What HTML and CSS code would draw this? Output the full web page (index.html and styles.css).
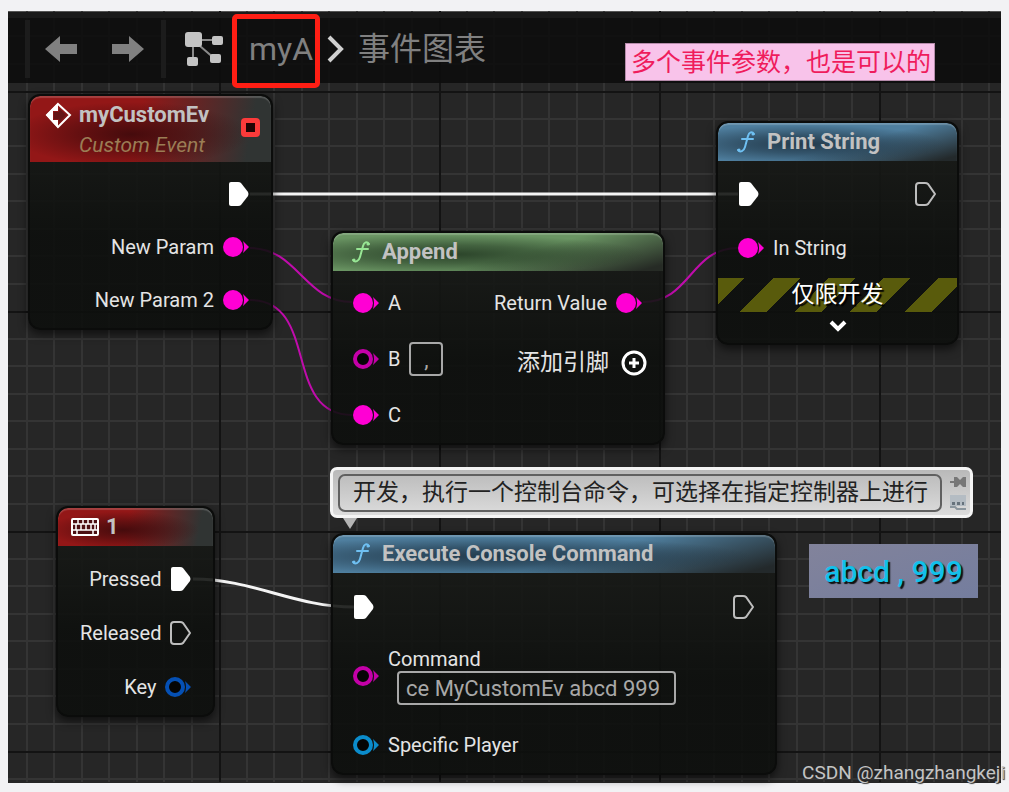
FILE: index.html
```html
<!DOCTYPE html>
<html lang="zh-CN">
<head>
  <meta charset="UTF-8">
  <meta name="viewport" content="width=device-width, initial-scale=1.0">
  <title>事件图表</title>
  <link rel="stylesheet" href="styles.css">
</head>
<body>
  <!-- icons -->
  <svg class="sprite" aria-hidden="true">
    <symbol id="exec-on" viewBox="0 0 21 24">
      <path d="M1 2Q1 0 3 0H10Q12 0 13 1L20 10Q21 12 20 14L13 23Q12 24 10 24H3Q1 24 1 22Z" fill="#fff"/>
    </symbol>
    <symbol id="exec-off" viewBox="0 0 21 24">
      <path d="M1 4Q1 1 4 1H10Q12 1 13 2L20 12L13 22Q12 23 10 23H4Q1 23 1 20Z" fill="none" stroke="#bdbdbd" stroke-width="2"/>
    </symbol>
    <symbol id="pin-on" viewBox="0 0 26 20">
      <circle cx="10" cy="10" r="10" fill="currentColor"/>
      <path d="M20 4L26 10L20 16Q22 10 20 4Z" fill="currentColor"/>
    </symbol>
    <symbol id="pin-off" viewBox="0 0 26 20">
      <circle cx="10" cy="10" r="8" fill="#050505" stroke="currentColor" stroke-width="4"/>
      <path d="M20 4L26 10L20 16Q22 10 20 4Z" fill="currentColor"/>
    </symbol>
    <symbol id="func" viewBox="0 0 20 22">
      <path d="M18 3C16 0 13 1 12 5L9 16C8 20 4 22 2 19M6 8H17" fill="none" stroke="currentColor" stroke-width="2" stroke-linecap="round"/>
      <circle cx="17" cy="3" r="1.5" fill="currentColor"/>
      <circle cx="3" cy="19" r="1.5" fill="currentColor"/>
    </symbol>
  </svg>

  <main class="graph">
    <svg class="graph__grid" aria-hidden="true">
      <defs>
        <pattern id="grid" x="211" y="80" width="220" height="220" patternUnits="userSpaceOnUse">
          <path d="M28 0V220M55 0V220M83 0V220M110 0V220M138 0V220M165 0V220M193 0V220M0 28H220M0 55H220M0 83H220M0 110H220M0 138H220M0 165H220M0 193H220" stroke="#343434" stroke-width="2"/>
          <path d="M1 0V220M0 1H220" stroke="#131313" stroke-width="2"/>
        </pattern>
      </defs>
      <rect width="100%" height="100%" fill="url(#grid)"/>
    </svg>

    <!-- wires -->
    <svg class="graph__wires" aria-hidden="true">
      <g fill="none" stroke="#f4f4f4" stroke-width="3">
        <path d="M242 183H730"/>
        <path d="M185 568C245 568 286 596 346 596"/>
      </g>
      <g fill="none" stroke="#c00cac" stroke-width="2">
        <path d="M242 237C290 237 296 291 344 291"/>
        <path d="M242 289C312 289 274 404 344 404"/>
        <path d="M635 291C683 291 682 237 730 237"/>
      </g>
    </svg>

    <header class="toolbar">
      <span class="toolbar__line"></span>
      <button class="toolbar__btn toolbar__btn_back" type="button" aria-label="Back">
        <svg width="32" height="26" viewBox="0 0 32 26"><path d="M0 13L15 0V8H32V18H15V26Z" fill="#808080"/></svg>
      </button>
      <button class="toolbar__btn toolbar__btn_forward" type="button" aria-label="Forward">
        <svg width="32" height="26" viewBox="0 0 32 26"><path d="M32 13L17 0V8H0V18H17V26Z" fill="#808080"/></svg>
      </button>
      <span class="toolbar__line"></span>
      <svg class="toolbar__graph" width="38" height="34" viewBox="0 0 38 34">
        <path d="M8 8H32M8 8V29M8 8L30 27" stroke="#8a8a8a" stroke-width="2"/>
        <g fill="#c4c4c4">
          <rect width="17" height="15" rx="3"/>
          <rect x="27" y="4" width="11" height="9" rx="2"/>
          <rect x="2" y="25" width="11" height="9" rx="2"/>
          <rect x="25" y="22" width="11" height="9" rx="2"/>
        </g>
      </svg>
      <nav class="crumbs">
        <a class="crumbs__link" href="#">myA</a>
        <svg width="17" height="28" viewBox="0 0 17 28"><path d="M2 2L14 14L2 26" fill="none" stroke="#d0d0d0" stroke-width="4"/></svg>
        <a class="crumbs__link" href="#">事件图表</a>
      </nav>
    </header>
    <div class="mark"></div>
    <div class="note">多个事件参数，也是可以的</div>

    <!-- myCustomEv -->
    <section class="node node_custom">
      <div class="node__head node__head_red node__head_tall">
        <svg width="27" height="27" viewBox="0 0 27 27">
          <path d="M13 2L25 13L13 25L2 13Z" fill="none" stroke="#fff" stroke-width="2"/>
          <path d="M13 1V9H8V18H13V26L1 13Z" fill="#fff"/>
          <path d="M9 10H14V6L21 13L14 20V17H9Z" fill="#641516"/>
        </svg>
        <div class="node__titles">
          <h2 class="node__title">myCustomEv</h2>
          <p class="node__sub">Custom Event</p>
        </div>
        <span class="delegate"></span>
      </div>
      <div class="node__body">
        <div class="pins pins_right">
          <div class="pin"><svg class="pin__exec"><use href="#exec-on"/></svg></div>
          <div class="pin">New Param<svg class="pin__data pin__data_string"><use href="#pin-on"/></svg></div>
          <div class="pin">New Param 2<svg class="pin__data pin__data_string"><use href="#pin-on"/></svg></div>
        </div>
      </div>
    </section>

    <!-- Print String -->
    <section class="node node_print">
      <div class="node__head node__head_blue">
        <svg class="node__func"><use href="#func"/></svg>
        <h2 class="node__title">Print String</h2>
      </div>
      <div class="node__body">
        <div class="pins">
          <div class="pin"><svg class="pin__exec"><use href="#exec-on"/></svg></div>
          <div class="pin"><svg class="pin__data pin__data_string"><use href="#pin-on"/></svg>In String</div>
        </div>
        <div class="pins pins_right">
          <div class="pin"><svg class="pin__exec"><use href="#exec-off"/></svg></div>
        </div>
      </div>
      <div class="node__dev">仅限开发</div>
      <button class="node__more" type="button" aria-label="More">
        <svg width="18" height="12" viewBox="0 0 18 12"><path d="M2 2L9 9L16 2" fill="none" stroke="#fff" stroke-width="4"/></svg>
      </button>
    </section>

    <!-- Append -->
    <section class="node node_append">
      <div class="node__head node__head_green">
        <svg class="node__func"><use href="#func"/></svg>
        <h2 class="node__title">Append</h2>
      </div>
      <div class="node__body">
        <div class="pins">
          <div class="pin"><svg class="pin__data pin__data_string"><use href="#pin-on"/></svg>A</div>
          <div class="pin">
            <svg class="pin__data pin__data_string pin__data_dim"><use href="#pin-off"/></svg>
            <label for="pin-b">B</label>
            <input class="field field_short" id="pin-b" type="text" value=",">
          </div>
          <div class="pin"><svg class="pin__data pin__data_string"><use href="#pin-on"/></svg>C</div>
        </div>
        <div class="pins pins_right">
          <div class="pin">Return Value<svg class="pin__data pin__data_string"><use href="#pin-on"/></svg></div>
          <button class="add" type="button">添加引脚
            <svg width="26" height="26" viewBox="0 0 26 26"><circle cx="13" cy="13" r="11" fill="none" stroke="#fff" stroke-width="3"/><path d="M13 8V18M8 13H18" stroke="#fff" stroke-width="3"/></svg>
          </button>
        </div>
      </div>
    </section>

    <!-- Key 1 -->
    <section class="node node_key">
      <div class="node__head node__head_red">
        <svg width="28" height="18" viewBox="0 0 28 18">
          <rect x="1" y="1" width="26" height="16" rx="1" fill="#4c1013" stroke="#fff" stroke-width="2"/>
          <path d="M2 6H26M2 12H26M7 2V6M12 2V6M17 2V6M22 2V6M5 6V12M10 6V12M15 6V12M20 6V12M24 6V12M6 12V17M22 12V17" stroke="#fff" stroke-width="1.5"/>
        </svg>
        <h2 class="node__title">1</h2>
      </div>
      <div class="node__body">
        <div class="pins pins_right">
          <div class="pin">Pressed<svg class="pin__exec"><use href="#exec-on"/></svg></div>
          <div class="pin">Released<svg class="pin__exec"><use href="#exec-off"/></svg></div>
          <div class="pin">Key<svg class="pin__data pin__data_key"><use href="#pin-off"/></svg></div>
        </div>
      </div>
    </section>

    <!-- comment bubble -->
    <div class="comment">
      <input class="comment__text" type="text" aria-label="Comment" value="开发，执行一个控制台命令，可选择在指定控制器上进行">
      <div class="comment__icons">
        <svg width="16" height="12" viewBox="0 0 16 12"><path d="M0 5H4V1H7L10 4L13 1H16V11H13L10 8L7 11H4V7H0Z" fill="#777"/></svg>
        <svg width="16" height="16" viewBox="0 0 16 16"><path d="M0 1H16V12H0Z" fill="#b4bcc3"/><path d="M2 8H5V11H2ZM7 8H10V11H7ZM12 8H14V11H12Z" fill="#66727c"/><path d="M0 13H5L7 15H16" fill="none" stroke="#8b969e" stroke-width="2"/></svg>
      </div>
    </div>

    <!-- Execute Console Command -->
    <section class="node node_console">
      <div class="node__head node__head_blue">
        <svg class="node__func"><use href="#func"/></svg>
        <h2 class="node__title">Execute Console Command</h2>
      </div>
      <div class="node__body">
        <div class="pins">
          <div class="pin"><svg class="pin__exec"><use href="#exec-on"/></svg></div>
          <div class="pin pin_tall">
            <svg class="pin__data pin__data_string pin__data_dim"><use href="#pin-off"/></svg>
            <div class="pin__stack">
              <label for="command">Command</label>
              <input class="field" id="command" type="text" value="ce MyCustomEv abcd 999">
            </div>
          </div>
          <div class="pin"><svg class="pin__data pin__data_object"><use href="#pin-off"/></svg>Specific Player</div>
        </div>
        <div class="pins pins_right">
          <div class="pin"><svg class="pin__exec"><use href="#exec-off"/></svg></div>
        </div>
      </div>
    </section>

    <div class="result">abcd , 999</div>
    <div class="watermark">CSDN @zhangzhangkeji</div>
  </main>
</body>
</html>
```
FILE: styles.css
```css
* {
  box-sizing: border-box;
}
body {
  display: flex;
  min-height: 100vh;
  margin: 0;
  padding: 11px 8px 9px;
  background-color: #f2f2f4;
  font-family: Roboto, "Noto Sans CJK SC", sans-serif;
  font-size: 20px;
  line-height: 24px;
  color: #e4e4e4;
}
button,
input {
  font: inherit;
  color: inherit;
}
button {
  padding: 0;
  border: none;
  background: none;
  cursor: pointer;
}
svg {
  display: block;
  flex-shrink: 0;
}
.sprite {
  position: absolute;
  width: 0;
  height: 0;
}

/* canvas */
.graph {
  position: relative;
  flex: 1;
  min-height: 772px;
  border-top: 1px solid #555;
  background-color: #262626;
}
.graph__grid,
.graph__wires {
  position: absolute;
  top: -1px;
  left: 0;
  width: 100%;
  height: 100%;
}

/* toolbar */
.toolbar {
  position: relative;
  display: flex;
  align-items: center;
  height: 71px;
  padding: 0 17px 4px;
  border-top: 6px solid #1a1a1a;
  background-color: rgba(12, 12, 12, .88);
}
.toolbar__line {
  width: 5px;
  height: 58px;
  background-color: #1c1c1c;
}
.toolbar__btn_back {
  margin: 0 35px 0 15px;
}
.toolbar__btn_forward {
  margin-right: 17px;
}
.toolbar__graph {
  margin: 0 26px 0 19px;
}
.crumbs {
  display: flex;
  align-items: center;
  gap: 14px;
  font-size: 32px;
  line-height: 40px;
}
.crumbs__link {
  color: #808080;
  text-decoration: none;
}
.mark {
  position: absolute;
  top: 2px;
  left: 224px;
  width: 88px;
  height: 74px;
  border: 5px solid #ff1e14;
  border-radius: 5px;
}
.note {
  position: absolute;
  top: 31px;
  left: 617px;
  padding: 2px 3px 0 5px;
  border: 1px solid #b68cab;
  background-color: #f8c3ea;
  font-size: 25px;
  line-height: 34px;
  color: #ef1c5c;
}

/* nodes */
.node {
  position: absolute;
  display: flex;
  flex-direction: column;
  border: 2px solid #0b0c0b;
  border-radius: 12px;
  background-image: linear-gradient(rgba(26, 28, 25, .9), rgba(13, 15, 13, .9) 60%);
  box-shadow: 0 4px 10px rgba(0, 0, 0, .6);
  overflow: hidden;
}
.node_custom {
  top: 82px;
  left: 20px;
  width: 245px;
}
.node_print {
  top: 109px;
  left: 708px;
  width: 243px;
}
.node_append {
  top: 219px;
  left: 323px;
  width: 334px;
}
.node_key {
  top: 494px;
  left: 48px;
  width: 159px;
}
.node_console {
  top: 521px;
  left: 323px;
  width: 446px;
}
.node__head {
  display: flex;
  align-items: center;
  gap: 11px;
  height: 38px;
  padding: 0 18px;
  border-radius: 10px 10px 0 0;
  box-shadow: inset 0 2px 1px rgba(255, 255, 255, .18);
}
.node__head_tall {
  align-items: flex-start;
  gap: 7px;
  height: 66px;
  padding: 6px 11px 0 15px;
}
.node_key .node__head {
  gap: 7px;
  padding-left: 13px;
}
.node__head_red {
  background-image:
    radial-gradient(ellipse at 42% 58%, rgba(50, 8, 10, .8), rgba(50, 8, 10, .5) 25%, transparent 60%),
    linear-gradient(100deg, #931717 45%, #303433 90%);
}
.node__head_blue {
  background-image:
    radial-gradient(ellipse at 36% 56%, rgba(24, 42, 56, .8), rgba(24, 42, 56, .5) 30%, transparent 65%),
    linear-gradient(165deg, #4f7f9f 55%, #23292b 95%);
}
.node__head_green {
  background-image:
    radial-gradient(ellipse at 36% 56%, rgba(28, 48, 28, .8), rgba(28, 48, 28, .5) 30%, transparent 65%),
    linear-gradient(165deg, #6a9563 55%, #262b25 95%);
}
.node__func {
  width: 20px;
  height: 22px;
}
.node__head_blue .node__func {
  color: #6fc0f2;
}
.node__head_green .node__func {
  color: #97e694;
}
.node__title {
  margin: 0;
  font-size: 22px;
  font-weight: 700;
  line-height: 26px;
  color: #c2c2c2;
  white-space: nowrap;
}
.node__sub {
  margin: 5px 0 0;
  font-size: 21px;
  font-style: italic;
  color: #9b7d55;
}
.node__titles {
  flex: 1;
}
.delegate {
  width: 19px;
  height: 19px;
  margin-top: 16px;
  border: 5px solid #fb3a3a;
  border-radius: 4px;
  background-color: #210404;
}
.node__body {
  display: flex;
  justify-content: space-between;
  padding: 17px 21px 14px 20px;
}

/* pins */
.pins {
  display: flex;
  flex-direction: column;
  gap: 22px;
}
.pins_right {
  align-items: flex-end;
  margin-left: auto;
}
.pin {
  display: flex;
  align-items: center;
  gap: 9px;
  height: 32px;
  white-space: nowrap;
}
.pin__exec {
  width: 21px;
  height: 24px;
}
.pin__data {
  width: 26px;
  height: 20px;
}
.pin__data_string {
  color: #ff00d4;
}
.pin__data_dim {
  color: #c400a8;
}
.pin__data_key {
  color: #0550b4;
}
.pin__data_object {
  color: #0b8ccb;
}
.node_custom .pins {
  gap: 21px;
}
.node_custom .node__body {
  padding: 16px 22px 12px;
}
.node_append .pins {
  gap: 24px;
}
.node_append .node__body {
  padding: 16px 21px 12px 20px;
}
.node_key .node__body {
  padding: 17px 22px 12px;
}
.node_console .pins {
  gap: 25px;
}
.node_console .node__body {
  padding: 18px 21px 12px 20px;
}
.pin_tall {
  height: 56px;
}
.pin__stack {
  display: flex;
  flex-direction: column;
}
.field {
  width: 279px;
  height: 34px;
  margin-left: 9px;
  padding: 0 7px;
  border: 2px solid #a8a8a8;
  border-radius: 4px;
  background: transparent;
  font-size: 22px;
  color: #a8a8a8;
}
.field_short {
  width: 34px;
  margin-left: 0;
  text-align: center;
}
.add {
  display: flex;
  align-items: center;
  gap: 12px;
  height: 40px;
  margin-right: -5px;
  font-size: 23px;
}
.node__dev {
  height: 34px;
  background-image: repeating-linear-gradient(135deg, #595b0c 0 19px, transparent 19px 39px);
  font-size: 23px;
  line-height: 34px;
  text-align: center;
  text-shadow: 2px 2px 1px #000;
  color: #fff;
}
.node__more {
  align-self: center;
  padding: 8px 8px 11px;
}

/* comment */
.comment {
  position: absolute;
  top: 455px;
  left: 322px;
  display: flex;
  align-items: center;
  gap: 8px;
  width: 643px;
  height: 51px;
  padding: 0 4px 0 5px;
  border: 3px solid #f4f4f4;
  border-radius: 7px;
  background-image: linear-gradient(#b9b9b9, #dcdcdc);
}
.comment::after {
  content: "";
  position: absolute;
  top: 48px;
  left: 10px;
  border: 7px solid transparent;
  border-top: 11px solid #b4b4b4;
  border-bottom: none;
}
.comment__text {
  flex: 1;
  min-width: 0;
  height: 38px;
  padding: 0 11px 5px 13px;
  border: 2px solid #606060;
  border-radius: 7px;
  background: transparent;
  font-size: 23px;
  color: #222;
}
.comment__icons {
  display: flex;
  flex-direction: column;
  gap: 6px;
}

.result {
  position: absolute;
  top: 532px;
  left: 801px;
  width: 169px;
  height: 54px;
  background-image: linear-gradient(160deg, #82839b, #747d9e);
  font-size: 30px;
  font-weight: 500;
  line-height: 56px;
  text-align: center;
  text-shadow: 2px 2px 1px #111;
  color: #12c0ea;
}
.watermark {
  position: absolute;
  right: -4px;
  bottom: -2px;
  font-size: 19px;
  text-shadow: 1px 1px 1px #333;
  color: #c4c4c4;
}
```
